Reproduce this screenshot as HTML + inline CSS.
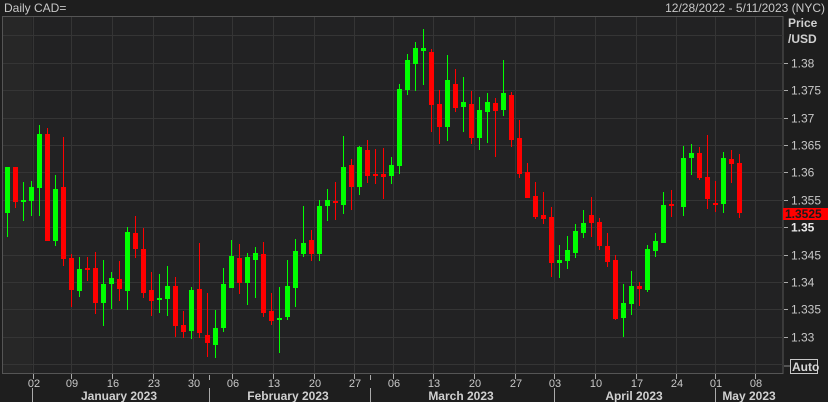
<!DOCTYPE html>
<html><head><meta charset="utf-8"><style>
html,body{margin:0;padding:0;background:#1e1e1e;width:828px;height:402px;overflow:hidden;font-family:"Liberation Sans","DejaVu Sans",sans-serif;}
svg{display:block}
</style></head><body>
<svg id="s" width="828" height="402" xmlns="http://www.w3.org/2000/svg" font-family="Liberation Sans, DejaVu Sans, sans-serif">
<rect x="0" y="0" width="828" height="402" fill="#1e1e1e"/>
<rect x="2.5" y="16.5" width="780.5" height="357" fill="#222223" stroke="#555" stroke-width="1"/>
<rect x="3" y="17" width="29" height="356" fill="#272727"/>
<g id="grid" stroke="#353535" stroke-width="1"></g>
<g id="candles"></g>
<text x="4" y="12" fill="#c8c8c8" font-size="12">Daily CAD=</text>
<text x="825" y="12" fill="#c8c8c8" font-size="12" text-anchor="end">12/28/2022 - 5/11/2023 (NYC)</text>
<text x="788" y="27" fill="#d0d0d0" font-size="12" font-weight="bold">Price</text>
<text x="788" y="43" fill="#d0d0d0" font-size="12" font-weight="bold">/USD</text>
<g id="ylab" fill="#c8c8c8" font-size="12"></g>
<rect x="783" y="208" width="45" height="12" fill="#ff0000"/>
<text x="785" y="218" fill="#1a1a1a" font-size="12" font-weight="bold">1.3525</text>
<rect x="790.5" y="359.5" width="27" height="14" fill="#1e1e1e" stroke="#c8c8c8"/>
<text x="792" y="371" fill="#d8d8d8" font-size="12" font-weight="bold">Auto</text>
<line x1="784" y1="366" x2="790" y2="366" stroke="#888"/>
<g id="xlab" fill="#c8c8c8" font-size="11" text-anchor="middle"></g>
<g fill="#d0d0d0" font-size="12" font-weight="bold" text-anchor="middle">
<text x="119" y="400">January 2023</text>
<text x="288" y="400">February 2023</text>
<text x="461" y="400">March 2023</text>
<text x="634" y="400">April 2023</text>
<text x="749" y="400">May 2023</text>
</g>
<g stroke="#aaa" stroke-width="1">
<line x1="32.5" y1="388" x2="32.5" y2="402"/>
<line x1="209.5" y1="388" x2="209.5" y2="402"/>
<line x1="370.5" y1="388" x2="370.5" y2="402"/>
<line x1="554.5" y1="388" x2="554.5" y2="402"/>
<line x1="715.5" y1="388" x2="715.5" y2="402"/>
<line x1="209.5" y1="375" x2="209.5" y2="380"/>
<line x1="370.5" y1="375" x2="370.5" y2="380"/>
</g>
</svg>
<script>
var NS="http://www.w3.org/2000/svg";
function el(p,t,a,txt){var e=document.createElementNS(NS,t);for(var k in a)e.setAttribute(k,a[k]);if(txt)e.textContent=txt;document.getElementById(p).appendChild(e);return e;}
var vx=[33,71,112,153,193,232,273,314,354,393,433,474,515,554,595,636,676,715,755];
var dl=["02","09","16","23","30","06","13","20","27","06","13","20","27","03","10","17","24","01","08"];
vx.forEach(function(x,i){el("grid","line",{x1:x+.5,y1:17,x2:x+.5,y2:373});
el("xlab","text",{x:x+1,y:387},dl[i]);
el("grid","line",{x1:x+.5,y1:374,x2:x+.5,y2:379,stroke:"#aaa"});});
var labs=["1.385","1.38","1.375","1.37","1.365","1.36","1.355","1.35","1.345","1.34","1.335","1.33","1.325"];
for(var k=-1;k<=11;k++){var y=Math.round(62.7+27.4*k)+.5;
el("grid","line",{x1:3,y1:y,x2:783,y2:y});
if(k>=0&&k<=10){el("grid","line",{x1:784,y1:y,x2:788,y2:y,stroke:"#aaa"});
var t=el("ylab","text",{x:791,y:y+4},labs[k+1]);if(labs[k+1]=="1.35"){t.setAttribute("font-weight","bold");t.setAttribute("fill","#e8e8e8");}}}
var d=[[167,167,213,237,1],[167,167,202,208,0],[182,200,202,221,1],[181,187,201,216,1],[125,134,188,216,1],[128,134,241,241,0],[175,189,241,246,1],[137,187,259,266,0],[254,258,290,307,0],[257,269,291,297,1],[257,268,270,281,0],[252,268,303,314,0],[260,284,303,326,1],[272,278,284,309,1],[261,279,289,301,0],[227,232,291,310,1],[216,233,249,258,0],[228,249,293,298,0],[272,290,301,316,0],[274,298,299,313,1],[266,286,299,316,1],[277,286,326,337,0],[311,325,332,338,0],[287,290,331,339,1],
[243,289,333,338,0],[293,335,343,357,0],[310,328,345,358,1],[268,284,328,332,1],[240,256,288,288,1],[244,258,283,294,0],[253,257,283,305,1],[247,253,260,298,1],[242,254,313,317,0],[293,311,321,325,0],[287,318,320,353,1],[260,286,317,320,1],[239,251,288,307,1],[206,243,254,257,1],[230,240,254,261,0],[200,206,254,261,1],[189,200,206,221,1],[182,201,202,220,0],[136,167,205,214,1],[159,165,187,210,0],[146,147,187,195,1],[140,150,176,183,0],[149,174,176,184,0],[148,174,177,199,0],[157,165,176,184,1],
[84,89,166,174,1],[54,60,90,95,1],[42,48,64,91,1],[29,48,51,85,1],[49,52,105,132,0],[90,104,127,144,0],[55,80,127,141,1],[69,84,108,112,0],[77,102,107,132,1],[91,104,138,144,0],[97,110,138,150,1],[93,102,112,143,1],[98,103,111,157,0],[60,93,110,116,1],[92,95,140,147,0],[120,138,174,178,0],[163,172,198,198,0],[182,196,217,219,0],[192,215,219,224,0],[207,217,263,277,0],[245,260,263,278,1],[236,250,261,269,1],[224,231,253,258,1],[210,223,233,238,1],
[197,215,223,237,0],[218,222,246,250,0],[233,246,262,267,0],[255,260,319,320,0],[284,303,318,337,1],[271,286,304,315,1],[282,286,289,306,0],[245,249,290,292,1],[233,241,251,257,1],[192,205,243,243,1],[190,204,206,217,0],
[146,158,207,216,1],[144,153,158,175,1],[147,153,178,180,0],[135,177,199,209,0],[181,203,205,212,0],[152,158,204,213,1],[150,159,164,183,0],[154,163,213,218,0]];
d.forEach(function(c,i){var x=i<84?7+8*i:683+8*(i-84);var col=c[4]?"#00ff00":"#ff0000";
el("candles","rect",{x:x,y:c[0],width:1,height:Math.max(1,c[3]-c[0]),fill:col});
el("candles","rect",{x:x-2,y:c[1],width:5,height:Math.max(2,c[2]-c[1]),fill:col});});
</script>
</body></html>
